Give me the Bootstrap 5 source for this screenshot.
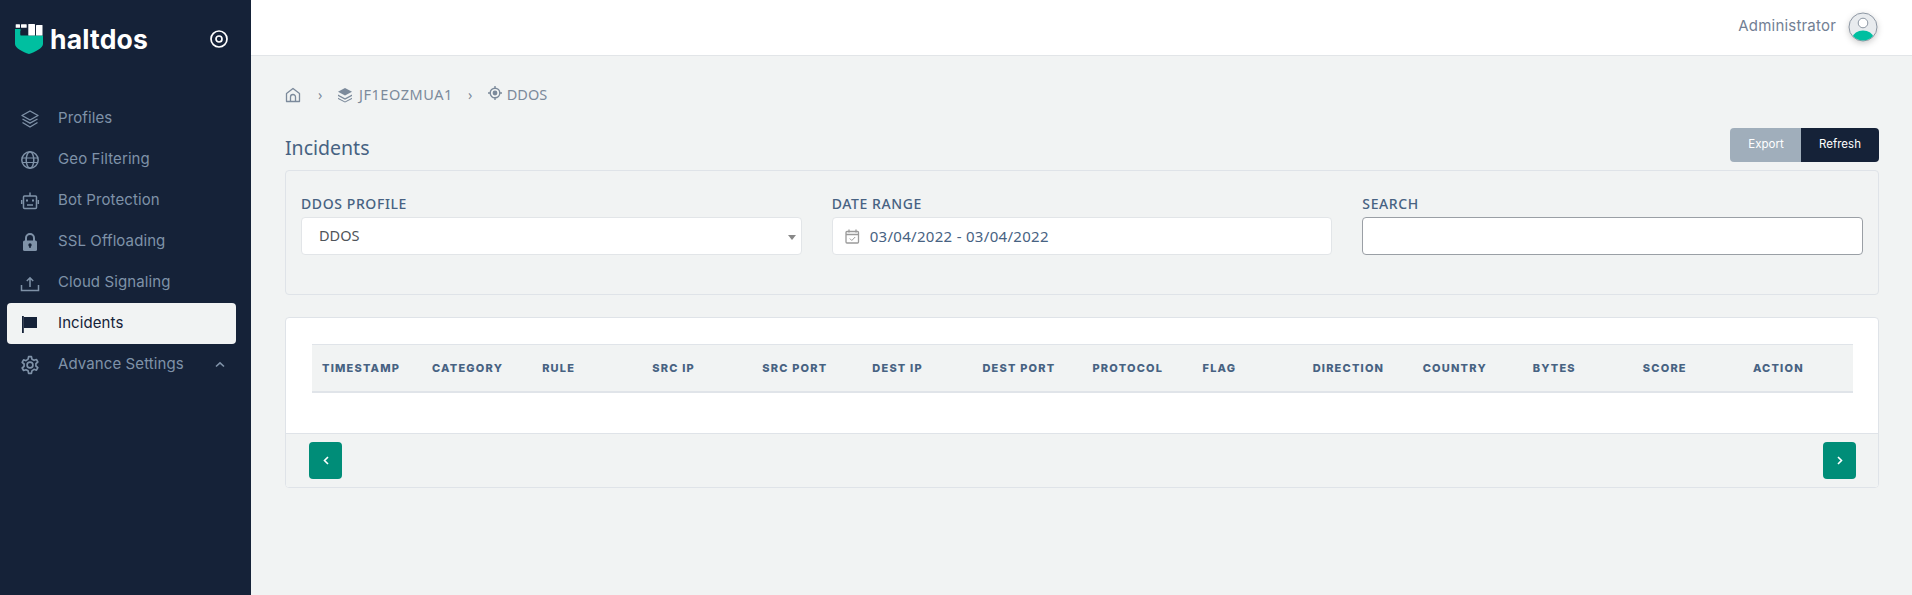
<!DOCTYPE html>
<html lang="en">
<head>
<meta charset="utf-8">
<title>Incidents</title>
<link rel="stylesheet" href="https://cdn.jsdelivr.net/npm/bootstrap@5.3.0/dist/css/bootstrap.min.css">
<style>
html,body{height:100%}
body{background:#f1f3f3;font-family:"Noto Sans",sans-serif;overflow:hidden}
.shell{height:595px}
.side{width:251px;background:#152238;flex:none}
.brandrow{height:78px;padding:0 22px 0 15px}
.brandname{font-family:"Inter",sans-serif;font-weight:700;font-size:26.5px;color:#fff;letter-spacing:.2px;line-height:1;margin-left:7px}
.menu{margin-top:20px;padding:0 15px 0 7px}
.menuitem{height:41px;padding-left:13px;border-radius:4px;color:#7f92a8;font-family:"Inter",sans-serif;font-size:15px;text-decoration:none}
.menuitem svg{flex:none}
.menuitem .lbl{margin-left:18px;letter-spacing:.1px}
.menuitem.on{background:#f1f3f3;color:#152238}
.main{min-width:0}
.topbar{height:56px;background:#fff;border-bottom:1px solid #e2e5e8;padding:0 34px 2px 0}
.adminname{font-family:"Inter",sans-serif;font-size:15px;color:#728094;letter-spacing:.2px}
.avatar{display:block;margin-left:12px;filter:drop-shadow(0 2px 3px rgba(0,0,0,.2))}
.page{padding:0 33px 0 34px}
.crumbs{height:35px;margin-top:21px;font-size:14.5px;color:#7c8a9b;letter-spacing:.55px}
.crumbs .sep{margin:0 14px 0 17px;font-size:14px}
.crumbs .sep.second{margin-left:15px;margin-right:14px}
.crumbs .gap6{margin-right:6px}
.crumbs .tight{letter-spacing:0}
.headrow{height:60px}
.pagetitle{font-size:19.5px;color:#476282;font-weight:400;margin:24px 0 0}
.btnexport,.btnrefresh{font-family:"Inter",sans-serif;font-size:11.5px;color:#fff;border:0;height:34px;border-radius:0}
.btnexport{width:72px;background:#a0aebb;border-radius:4px 0 0 4px}
.btnrefresh{width:78px;background:#152238;border-radius:0 4px 4px 0}
.btnexport:hover,.btnrefresh:hover{color:#fff}
.btnwrap{margin-top:16px}
.filters{height:125px;border:1px solid #dfe3e8;border-radius:4px;padding:25px 15px 0 15px;margin-top:-2px}
.filtergrid{display:grid;grid-template-columns:repeat(3,1fr);column-gap:30px}
.flabel{display:block;font-size:14px;font-weight:500;color:#476282;line-height:16px;margin-bottom:5px;letter-spacing:.6px}
.fbox{height:38px;background:#fff;border:1px solid #e2e5e8;border-radius:4px;font-size:14.5px;color:#4f5459;position:relative}
.fbox.sel{padding-left:17px}
.fbox.sel::after{content:"";position:absolute;right:5px;top:17px;border:4px solid transparent;border-top:5px solid #888;border-bottom:0}
.fbox.date{padding-left:12px;color:#476282;font-size:15px;letter-spacing:.3px}
.fbox.date svg{margin-right:10px}
.fbox.srch{border-color:#9a9fa5;width:100%;display:block;padding:0 12px;outline:0}
.tcard{margin-top:22px;height:171px;border:1px solid #dfe3e8;border-radius:4px;background:#fff;overflow:hidden}
.tablewrap{padding:26px 25px 0 26px;height:116px}
.gridhead{display:grid;grid-template-columns:repeat(14,1fr);height:49px;background:#f1f3f3;border-top:1px solid #e0e4e9;border-bottom:2px solid #e0e4e9;font-family:"Inter",sans-serif;font-weight:800;font-size:11px;letter-spacing:1.2px;color:#476282}
.gridhead span{padding-left:10px;white-space:nowrap}
.tfoot{height:54px;background:#f1f3f3;border-top:1px solid #dfe3e8;padding:0 22px 0 23px}
.pager{width:33px;height:37px;background:#008d78;border:0;border-radius:4px;padding:0}
.pager:hover{background:#008d78}
</style>
</head>
<body>
<div class="shell d-flex">
  <aside class="side d-flex flex-column">
    <div class="brandrow d-flex align-items-center justify-content-between">
      <div class="d-flex align-items-center">
        <svg width="28" height="30" viewBox="0 0 28 30"><path d="M0 5h5.500v6.500H28V20c0 4-8 8-14 10C8 28 0 24 0 20z" fill="#00bfa0"/><path d="M5.500 7h7v3.800h-7z" fill="#152238"/><g fill="#fff"><rect x=".7" y=".3" width="4.300" height="3.500" rx=".5"/><rect x="6" y=".3" width="5.700" height="3.500" rx=".5"/><rect x="13.300" y="0" width="6.700" height="11.500" rx=".5"/><rect x="21" y="1" width="6.500" height="10.500" rx=".5"/></g></svg>
        <span class="brandname">haltdos</span>
      </div>
      <svg width="20" height="20" viewBox="0 0 20 20" fill="none" stroke="#fff"><circle cx="10" cy="10" r="8" stroke-width="1.700"/><circle cx="10" cy="10" r="3" stroke-width="1.700"/></svg>
    </div>
    <nav class="menu d-flex flex-column">
      <a class="menuitem d-flex align-items-center" href="#"><svg width="20" height="20" viewBox="0 0 20 20" fill="none" stroke="#7f92a8" stroke-width="1.400" stroke-linejoin="round"><path d="M10 2l8 4.500-8 4.500-8-4.500z"/><path d="M2.500 10L10 14.200l7.500-4.200"/><path d="M2.500 13.500L10 18l7.500-4.500"/></svg><span class="lbl">Profiles</span></a>
      <a class="menuitem d-flex align-items-center" href="#"><svg width="20" height="20" viewBox="0 0 20 20" fill="none" stroke="#7f92a8" stroke-width="1.500"><circle cx="10" cy="10" r="8.200"/><ellipse cx="10" cy="10" rx="3.800" ry="8.200"/><path d="M2 8h16M2 12.500h16" stroke-width="1.200"/></svg><span class="lbl">Geo Filtering</span></a>
      <a class="menuitem d-flex align-items-center" href="#"><svg width="20" height="20" viewBox="0 0 20 20" fill="none" stroke="#7f92a8" stroke-width="1.500"><rect x="3.500" y="5" width="13" height="12.500" rx="1"/><path d="M10 1.500V5M7 14h6M1.700 9v4M18.300 9v4"/><rect x="6" y="8.500" width="2" height="2" fill="#7f92a8" stroke="none"/><rect x="12" y="8.500" width="2" height="2" fill="#7f92a8" stroke="none"/></svg><span class="lbl">Bot Protection</span></a>
      <a class="menuitem d-flex align-items-center" href="#"><svg width="20" height="20" viewBox="0 0 20 20"><path d="M6 9V6a4 4 0 018 0v3" fill="none" stroke="#7f92a8" stroke-width="2"/><rect x="3" y="8.500" width="14" height="10.500" rx="1.500" fill="#7f92a8"/><circle cx="10" cy="13" r="1.700" fill="#152238"/><rect x="9.300" y="13" width="1.400" height="3" fill="#152238"/></svg><span class="lbl">SSL Offloading</span></a>
      <a class="menuitem d-flex align-items-center" href="#"><svg width="20" height="20" viewBox="0 0 20 20" fill="none" stroke="#7f92a8" stroke-width="1.500"><path d="M1.500 12v5.500h17V12"/><path d="M10 14V5M6.800 8L10 4.800 13.200 8"/></svg><span class="lbl">Cloud Signaling</span></a>
      <a class="menuitem on d-flex align-items-center" href="#"><svg width="20" height="20" viewBox="0 0 20 20"><rect x="2" y="2" width="1.800" height="17" fill="#152238"/><path d="M3.800 3H17v11H3.800z" fill="#152238"/></svg><span class="lbl">Incidents</span></a>
      <a class="menuitem d-flex align-items-center" href="#"><svg width="20" height="20" viewBox="0 0 24 24" fill="none" stroke="#7f92a8" stroke-width="2" stroke-linejoin="round"><circle cx="12" cy="12" r="3.500"/><path d="M10.300 2h3.400l.6 3 2.500 1.400 2.900-1 1.700 3-2.300 2v2.800l2.300 2-1.700 3-2.900-1L14.300 19l-.6 3h-3.400l-.6-3-2.500-1.400-2.900 1-1.700-3 2.300-2v-2.800l-2.300-2 1.700-3 2.900 1L9.700 5z"/></svg><span class="lbl">Advance Settings</span><svg class="ms-auto" style="margin-right:11px" width="10" height="7" viewBox="0 0 10 7" fill="none" stroke="#7f92a8" stroke-width="1.600"><path d="M1 5.500L5 1.800l4 3.700"/></svg></a>
    </nav>
  </aside>
  <div class="main flex-grow-1 d-flex flex-column">
    <header class="topbar d-flex align-items-center justify-content-end">
      <span class="adminname">Administrator</span>
      <svg class="avatar" width="30" height="30" viewBox="0 0 30 30"><defs><clipPath id="av"><circle cx="15" cy="15" r="13.500"/></clipPath></defs><circle cx="15" cy="15" r="14" fill="#e8ebee" stroke="#8d97a3"/><g clip-path="url(#av)"><ellipse cx="15" cy="25" rx="10" ry="6.500" fill="#00bfa0"/></g><circle cx="15" cy="11" r="4.800" fill="#fff" stroke="#8d97a3"/></svg>
    </header>
    <main class="page">
      <div class="crumbs d-flex align-items-center">
        <svg width="16" height="16" viewBox="0 0 16 16" fill="none" stroke="#7c8a9b" stroke-width="1.300" stroke-linejoin="round"><path d="M1.500 6.500L8 1.500l6.500 5V14.500h-13z"/><path d="M5.500 14.500V10a2.500 2.500 0 015 0v4.500"/></svg>
        <span class="sep">›</span>
        <svg class="gap6" width="16" height="16" viewBox="0 0 16 16" fill="#7c8a9b"><path d="M8 1l7 3.800-7 3.800-7-3.800z"/><path d="M1 7.500l7 3.800 7-3.800v1.500l-7 3.800L1 9z"/><path d="M1 10.700l7 3.800 7-3.800v1.300l-7 3.500-7-3.500z"/></svg>
        <span>JF1EOZMUA1</span>
        <span class="sep second">›</span>
        <svg class="me-1 mb-1" width="16" height="16" viewBox="0 0 16 16" fill="none" stroke="#7c8a9b" stroke-width="1.400"><circle cx="8" cy="8" r="4.800"/><circle cx="8" cy="8" r="1.700" fill="#7c8a9b"/><path d="M8 1v2M8 13v2M1 8h2M13 8h2"/></svg>
        <span class="tight">DDOS</span>
      </div>
      <div class="headrow d-flex justify-content-between align-items-start">
        <h1 class="pagetitle">Incidents</h1>
        <div class="btn-group btnwrap" role="group">
          <button class="btn btnexport" type="button">Export</button>
          <button class="btn btnrefresh" type="button">Refresh</button>
        </div>
      </div>
      <section class="filters">
        <div class="filtergrid">
          <div><span class="flabel">DDOS PROFILE</span><div class="fbox sel d-flex align-items-center">DDOS</div></div>
          <div><span class="flabel">DATE RANGE</span><div class="fbox date d-flex align-items-center"><svg width="15" height="15" viewBox="0 0 15 15" fill="none" stroke="#9a9a9a" stroke-width="1.300"><rect x="1" y="2.500" width="12.500" height="11.500" rx="1"/><path d="M1 5.500h12.500M4 .5v3M11 .5v3"/><path d="M4.800 9.500l2 2 3.400-3.500" stroke-width="1"/></svg>03/04/2022 - 03/04/2022</div></div>
          <div><span class="flabel">SEARCH</span><input class="fbox srch" type="text" aria-label="Search"></div>
        </div>
      </section>
      <section class="tcard d-flex flex-column">
        <div class="tablewrap">
          <div class="gridhead align-items-center">
            <span>TIMESTAMP</span><span>CATEGORY</span><span>RULE</span><span>SRC IP</span><span>SRC PORT</span><span>DEST IP</span><span>DEST PORT</span><span>PROTOCOL</span><span>FLAG</span><span>DIRECTION</span><span>COUNTRY</span><span>BYTES</span><span>SCORE</span><span>ACTION</span>
          </div>
        </div>
        <div class="tfoot d-flex justify-content-between align-items-center">
          <button class="btn pager d-flex align-items-center justify-content-center" type="button" aria-label="Previous"><svg width="6" height="9" viewBox="0 0 6 9" fill="none" stroke="#fff" stroke-width="1.600"><path d="M5 1L1.500 4.500 5 8"/></svg></button>
          <button class="btn pager d-flex align-items-center justify-content-center" type="button" aria-label="Next"><svg width="6" height="9" viewBox="0 0 6 9" fill="none" stroke="#fff" stroke-width="1.600"><path d="M1 1l3.500 3.500L1 8"/></svg></button>
        </div>
      </section>
    </main>
  </div>
</div>
<script src="https://cdn.jsdelivr.net/npm/bootstrap@5.3.0/dist/js/bootstrap.bundle.min.js"></script>
</body>
</html>
